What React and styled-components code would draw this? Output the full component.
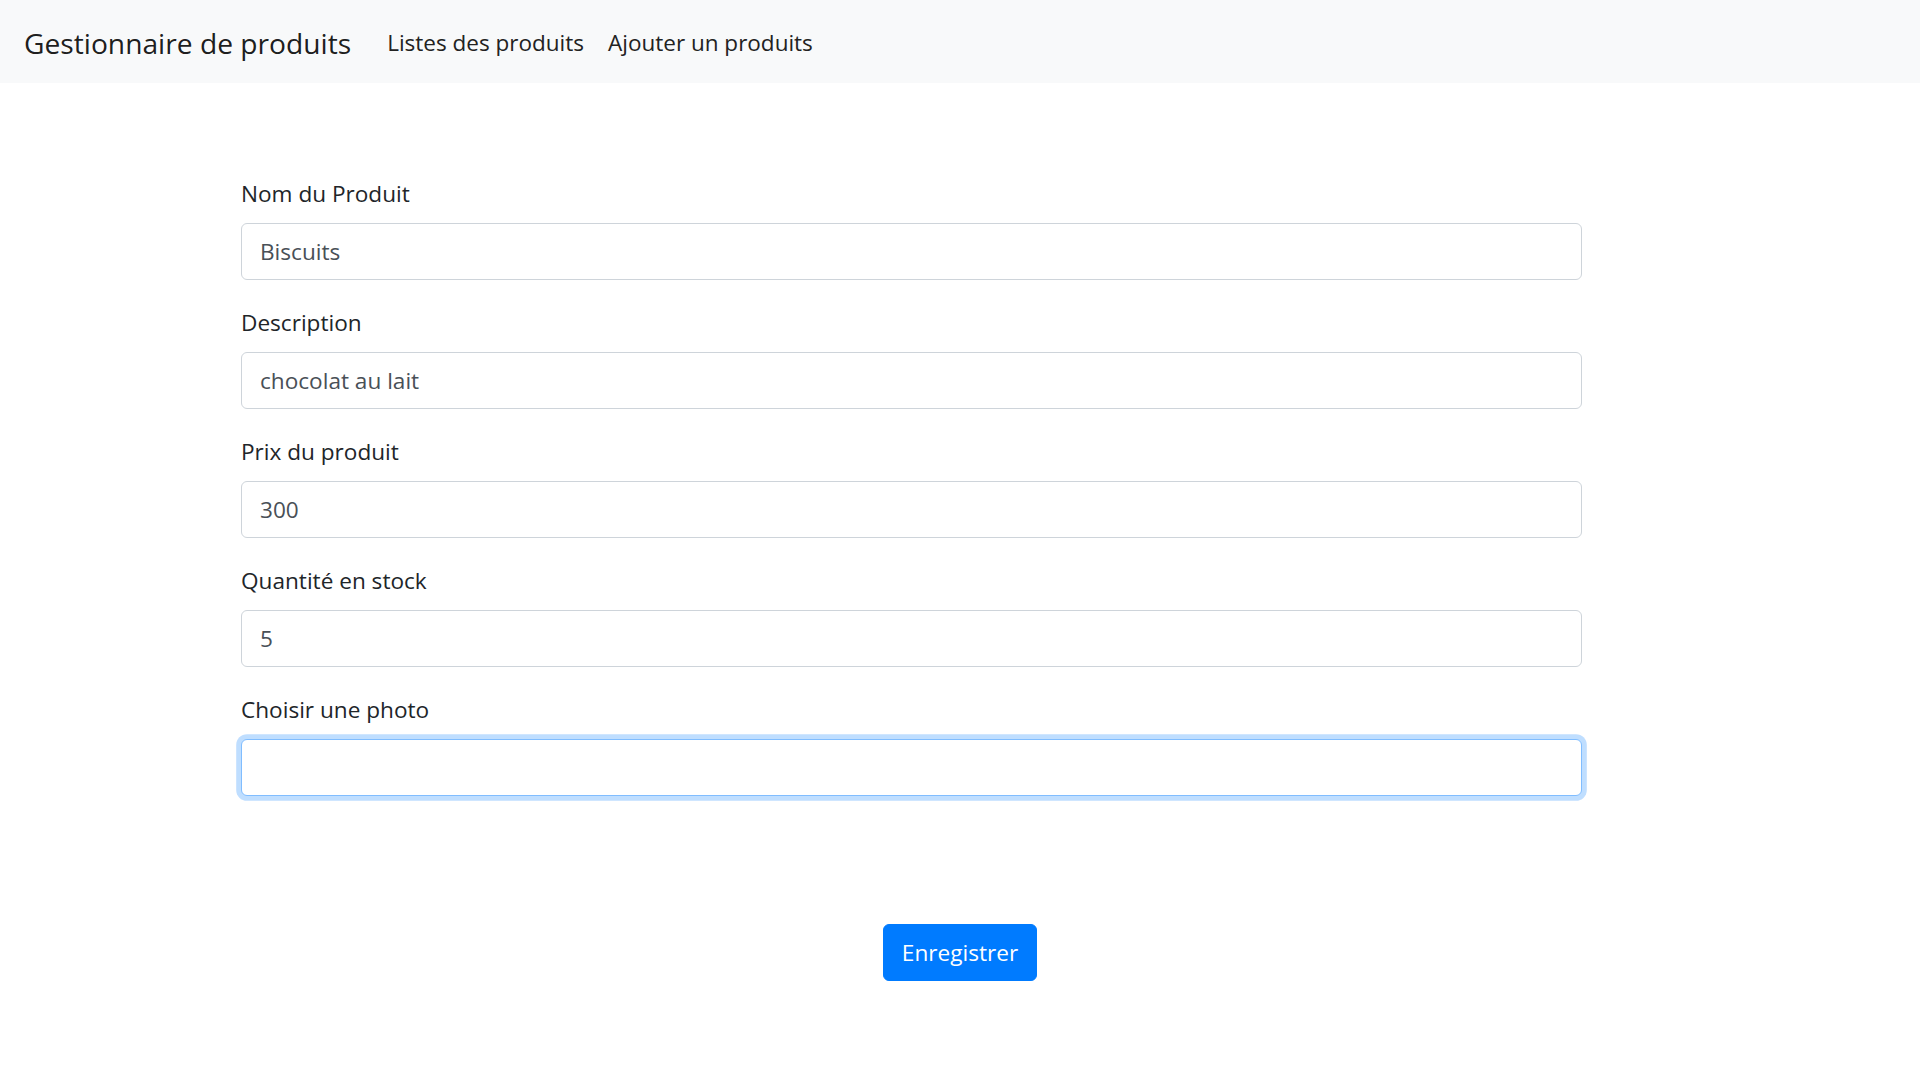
import React from 'react';
import styled, { createGlobalStyle } from 'styled-components';

const GlobalStyle = createGlobalStyle`
  * { box-sizing: border-box; }
  body {
    margin: 0;
    background: #fff;
    font-family: "Open Sans", "Noto Sans", Arial, sans-serif;
    color: #212529;
  }
`;

const fields = [
  { id: 'nom', label: 'Nom du Produit', value: 'Biscuits' },
  { id: 'desc', label: 'Description', value: 'chocolat au lait' },
  { id: 'prix', label: 'Prix du produit', value: '300' },
  { id: 'qte', label: 'Quantité en stock', value: '5' },
  { id: 'photo', label: 'Choisir une photo', value: '', focused: true },
];

function App() {
  return (
    <>
      <GlobalStyle />
      <Navbar>
        <Brand href="#">Gestionnaire de produits</Brand>
        <Nav>
          <NavLink href="#">Listes des produits</NavLink>
          <NavLink href="#">Ajouter un produits</NavLink>
        </Nav>
      </Navbar>
      <Main>
        <Form onSubmit={e => e.preventDefault()}>
          {fields.map(f => (
            <Group key={f.id}>
              <Label htmlFor={f.id}>{f.label}</Label>
              <Input id={f.id} defaultValue={f.value} $focused={f.focused} />
            </Group>
          ))}
        </Form>
        <Actions>
          <Button type="button">Enregistrer</Button>
        </Actions>
      </Main>
    </>
  );
}

const Navbar = styled.nav`
  height: 83px;
  background: #f8f9fa;
  display: flex;
  align-items: center;
  padding: 3px 24px 0;
`;

const Brand = styled.a`
  font-size: 28.2px;
  line-height: 45px;
  color: rgba(0, 0, 0, 0.9);
  text-decoration: none;
  margin-right: 24px;
`;

const Nav = styled.div`
  display: flex;
  align-items: center;
`;

const NavLink = styled.a`
  font-size: 22.5px;
  line-height: 36px;
  color: #222;
  text-decoration: none;
  padding: 0 12px;
`;

const Main = styled.main`
  padding-top: 92px;
`;

const Form = styled.form`
  width: 1341px;
  margin-left: 241px;
`;

const Group = styled.div`
  margin-bottom: 24px;
  display: flex;
  flex-direction: column;
`;

const Label = styled.label`
  font-size: 22.6px;
  line-height: 36px;
  padding-top: 1px;
  margin-bottom: 11px;
  color: #212529;
`;

const Input = styled.input`
  height: 57px;
  width: 100%;
  padding: 0 18px;
  font-family: inherit;
  font-size: 22.6px;
  color: #495057;
  background: #fff;
  border: 1.5px solid #ced4da;
  border-radius: 6px;
  outline: none;
  ${props =>
    props.$focused &&
    `
    border-color: #80bdff;
    box-shadow: 0 0 0 4.8px rgba(0, 123, 255, 0.25);
  `}
`;

const Actions = styled.div`
  display: flex;
  justify-content: center;
  margin-top: 128px;
`;

const Button = styled.button`
  height: 57px;
  padding: 0 18px;
  font-family: inherit;
  font-size: 22.6px;
  color: #fff;
  background: #007bff;
  border: 1.5px solid #007bff;
  border-radius: 6px;
  cursor: pointer;
`;

export default App;
